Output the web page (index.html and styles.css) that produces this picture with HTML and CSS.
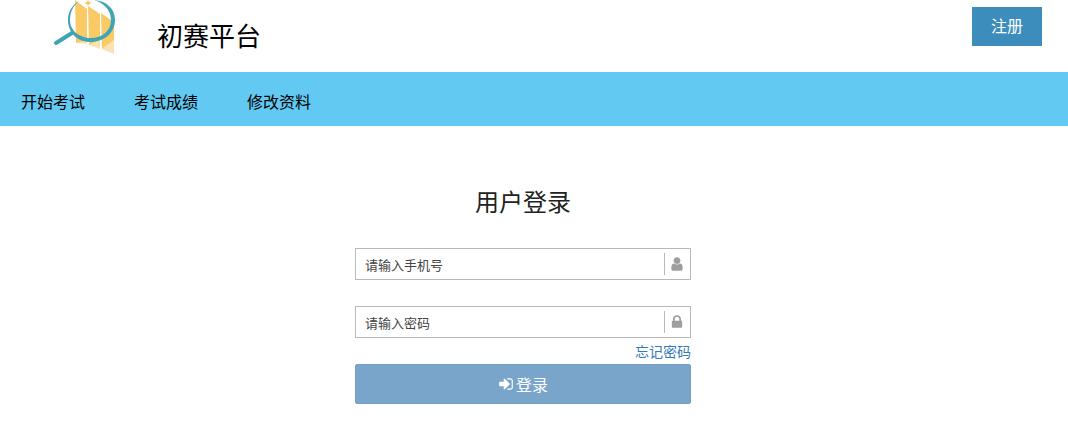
FILE: index.html
```html
<!DOCTYPE html>
<html lang="zh-CN">
<head>
  <meta charset="UTF-8">
  <title>初赛平台</title>
  <link rel="stylesheet" href="styles.css">
</head>
<body>
  <header class="header">
    <svg class="logo" viewBox="0 0 90 60" aria-hidden="true">
      <path fill="#fae2b4" d="M36 43l10-4 1 5zM49 45l11-5v9zM62 49l12-9v14z"/>
      <path fill="#f9ca66" d="M35 0l12 9v31l-11 3zM48 6l12 8v26l-11 5zM61 13l13 9v18l-12 9z"/>
      <path fill="#f9c153" d="M48 0l1 2 3 1-3 1-1 2-1-2-3-1 3-1z"/>
      <path fill="#3fa4b4" d="M39 1C32 5 28 12 28 20c0 13 10 22 22 22 14 0 25-9 25-22C75 8 66 1 54 0c9 3 17 9 17 20 0 11-9 18-20 18S30 31 30 20c0-8 3-14 9-19z"/>
      <path stroke="#3fa4b4" stroke-width="4" stroke-linecap="round" d="M16 43l16-10"/>
    </svg>
    <h1 class="site-name">初赛平台</h1>
    <a class="register" href="#">注册</a>
  </header>

  <nav class="nav">
    <a href="#">开始考试</a>
    <a href="#">考试成绩</a>
    <a href="#">修改资料</a>
  </nav>

  <main class="main">
    <form class="login">
      <h2 class="login-title">用户登录</h2>

      <div class="field">
        <input type="text" placeholder="请输入手机号" aria-label="请输入手机号">
        <span class="field-icon">
          <svg class="icon" viewBox="0 0 1792 1792" aria-hidden="true"><path d="M1536 1399q0 109-62.500 187t-150.500 78h-854q-88 0-150.500-78t-62.500-187q0-85 8.500-160.500t31.500-152 58.500-131 94-89 134.500-34.500q131 128 313 128t313-128q76 0 134.500 34.500t94 89 58.500 131 31.500 152 8.500 160.500zm-256-887q0 159-112.500 271.500t-271.500 112.500-271.500-112.500-112.500-271.500 112.500-271.500 271.500-112.500 271.500 112.500 112.500 271.500z"/></svg>
        </span>
      </div>

      <div class="field">
        <input type="password" placeholder="请输入密码" aria-label="请输入密码">
        <span class="field-icon">
          <svg class="icon" viewBox="0 0 1792 1792" aria-hidden="true"><path d="M640 768h512v-192q0-106-75-181t-181-75-181 75-75 181v192zm832 96v576q0 40-28 68t-68 28h-960q-40 0-68-28t-28-68v-576q0-40 28-68t68-28h32v-192q0-184 132-316t316-132 316 132 132 316v192h32q40 0 68 28t28 68z"/></svg>
        </span>
      </div>

      <a class="forgot" href="#">忘记密码</a>

      <button class="submit" type="submit">
        <svg class="icon" viewBox="0 0 1792 1792" aria-hidden="true"><path d="M1312 896q0 26-19 45l-544 544q-19 19-45 19t-45-19-19-45v-288h-448q-26 0-45-19t-19-45v-384q0-26 19-45t45-19h448v-288q0-26 19-45t45-19 45 19l544 544q19 19 19 45zm352-352v704q0 119-84.500 203.500t-203.500 84.500h-320q-13 0-22.500-9.500t-9.500-22.500q0-4-1-20t-.5-26.500 3-23.500 10-19.500 20.500-6.500h320q66 0 113-47t47-113v-704q0-66-47-113t-113-47h-312l-11.500-1-11.500-3-8-5.500-7-9-2-13.500q0-4-1-20t-.5-26.500 3-23.500 10-19.500 20.500-6.500h320q119 0 203.500 84.500t84.500 203.500z"/></svg>
        登录
      </button>
    </form>
  </main>
</body>
</html>
```

FILE: styles.css
```css
* {
  box-sizing: border-box;
}

body {
  margin: 0;
  background: #fff;
  color: #000;
  font-family: "Noto Sans CJK SC", sans-serif;
}

a {
  text-decoration: none;
}

.header {
  display: flex;
  align-items: flex-start;
  height: 72px;
  padding: 0 26px 0 40px;
}

.logo {
  width: 90px;
  height: 60px;
}

.site-name {
  margin: 15px 0 0 27px;
  font-size: 26px;
  font-weight: 400;
  line-height: 40px;
}

.register {
  margin: 7px 0 0 auto;
  padding: 0 19px 3px;
  background: #3c8dbc;
  color: #fff;
  font-size: 16px;
  line-height: 36px;
}

.nav {
  display: flex;
  gap: 49px;
  padding: 17px 21px 13px;
  background: #62caf2;
}

.nav a {
  color: #000;
  font-size: 16px;
  line-height: 24px;
}

.main {
  padding: 55px 22px 40px 0;
}

.login {
  display: flex;
  flex-direction: column;
  width: 336px;
  max-width: 100%;
  margin: 0 auto;
}

.login-title {
  margin: 0 0 27px;
  color: #222;
  font-size: 24px;
  font-weight: 400;
  line-height: 40px;
  text-align: center;
}

.field {
  display: flex;
  align-items: center;
  height: 32px;
  margin-bottom: 26px;
  border: 1px solid #b9b9b9;
}

.field input {
  flex: 1;
  min-width: 0;
  padding: 0 9px;
  border: 0;
  outline: 0;
  background: none;
  color: #444;
  font: inherit;
  font-size: 13px;
}

.field input::placeholder {
  color: #444;
  opacity: 1;
}

.field-icon {
  display: flex;
  align-items: center;
  justify-content: center;
  width: 26px;
  height: 22px;
  padding-right: 1px;
  border-left: 1px solid #b9b9b9;
  color: #9e9e9e;
}

.icon {
  width: 16px;
  height: 16px;
  fill: currentColor;
}

.forgot {
  align-self: flex-end;
  margin: -24px 0 2px;
  color: #337ab7;
  font-size: 14px;
  line-height: 22px;
}

.submit {
  display: flex;
  align-items: center;
  justify-content: center;
  gap: 2px;
  height: 40px;
  padding: 0 6px;
  border: 1px solid #739fc4;
  border-radius: 2px;
  background: #7aa5cb;
  color: #fff;
  font: inherit;
  font-size: 16px;
}
```
